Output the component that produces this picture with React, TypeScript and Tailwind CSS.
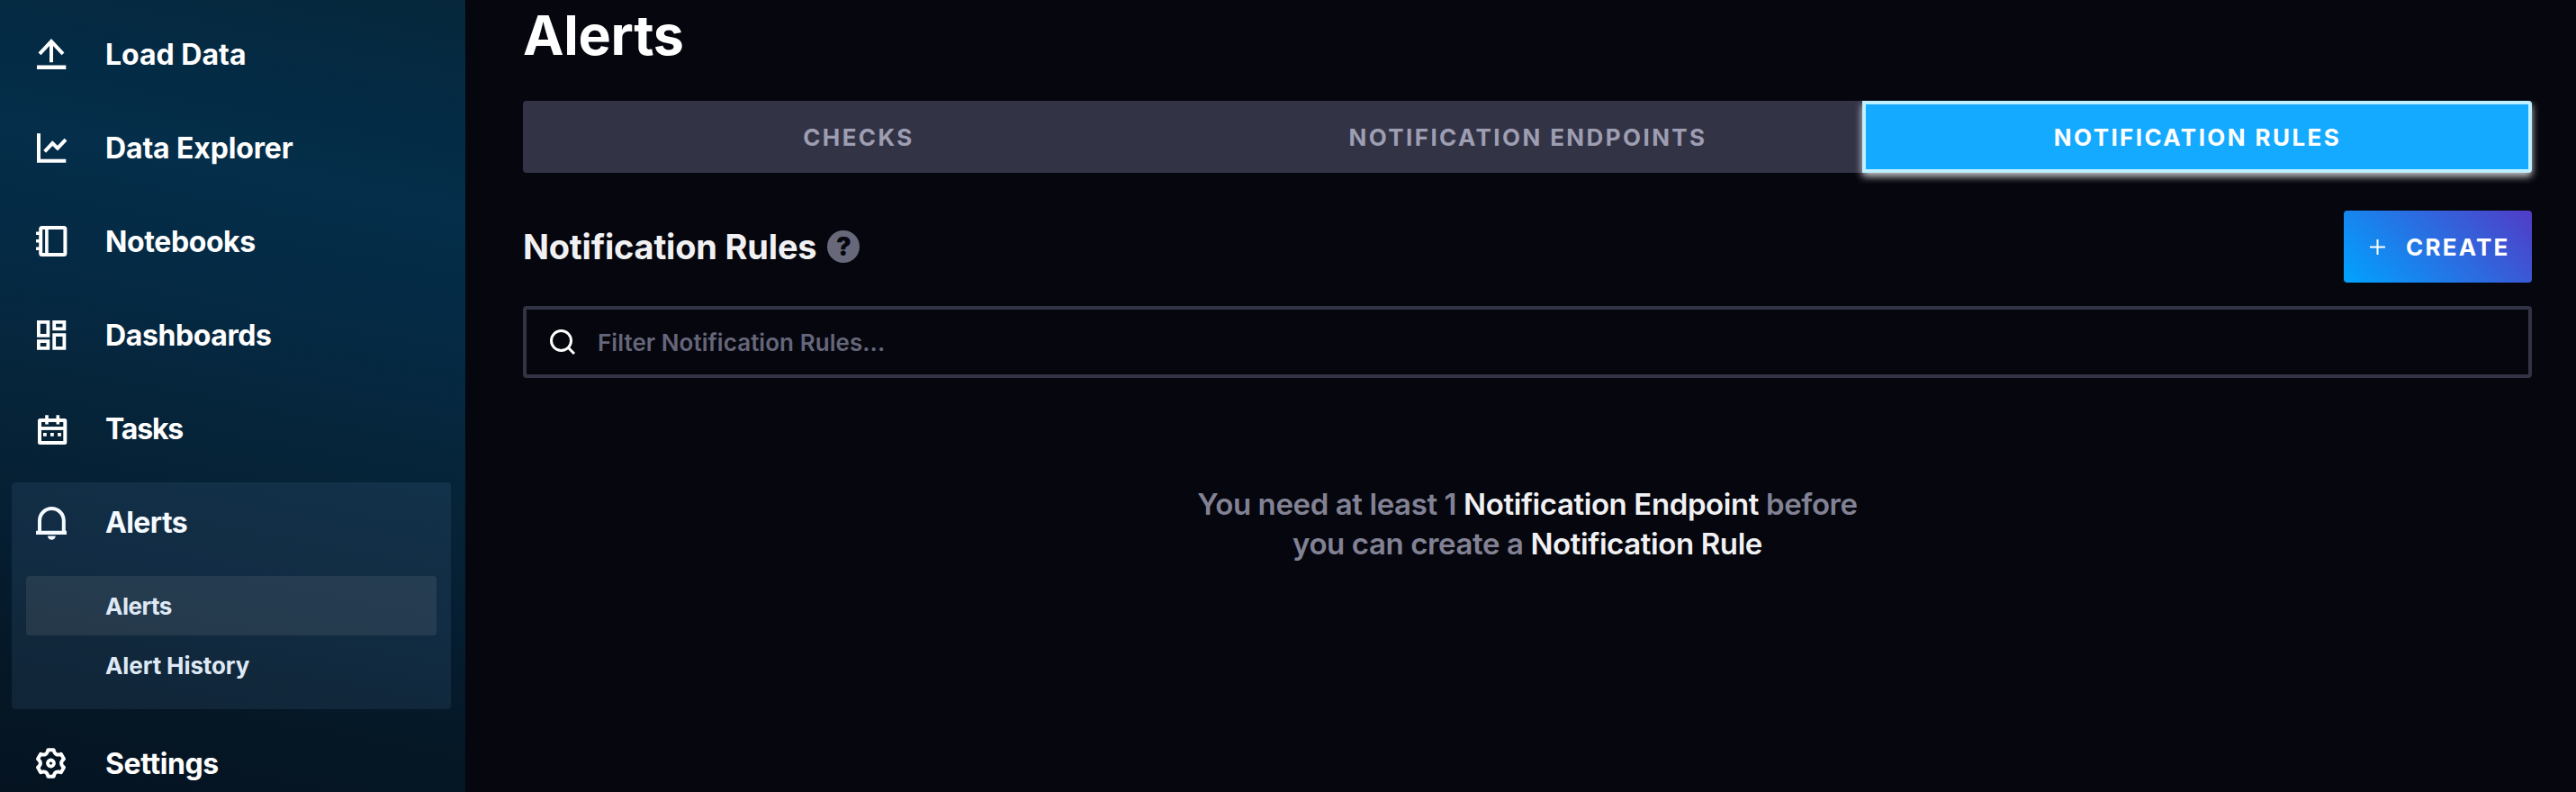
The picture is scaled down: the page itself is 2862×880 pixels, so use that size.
import React from "react";

const SCALLOPED_GEAR = (() => {
  const cx = 17.5;
  const cy = 18;
  const point = (deg: number, r: number) => {
    const a = (deg * Math.PI) / 180;
    return `${(cx + r * Math.cos(a)).toFixed(2)} ${(cy + r * Math.sin(a)).toFixed(2)}`;
  };
  let d = "";
  for (let i = 0; i < 6; i++) {
    const a = -90 + i * 60;
    d += `${i === 0 ? "M" : "L"}${point(a - 12, 15.2)} L${point(a + 12, 15.2)} `;
    d += `C${point(a + 20, 10.8)} ${point(a + 40, 10.8)} ${point(a + 48, 15.2)} `;
  }
  return d + "Z";
})();

function Icon({ children }: { children: React.ReactNode }) {
  return (
    <svg
      className="h-9 w-9 shrink-0 overflow-visible"
      viewBox="0 0 36 36"
      fill="none"
      stroke="currentColor"
      strokeWidth={4}
    >
      {children}
    </svg>
  );
}

const UploadIcon = () => (
  <Icon>
    <path d="M2 32.7H34.3" strokeWidth={4.6} />
    <path d="M5 17.8 18 4 31 17.8M18 3.5V27.3" />
  </Icon>
);

const ChartIcon = () => (
  <Icon>
    <path d="M4 2.3V32.7H34.3" />
    <path d="M10.7 22.3 19.3 13.2 25 18.7 34 9.2" />
  </Icon>
);

const NotebookIcon = () => (
  <Icon>
    <rect x="6.2" y="3" width="27.2" height="30" rx="1.5" />
    <path d="M12.9 3V33" strokeWidth={3.6} />
    <path d="M1 9.3H5M1 17.7H5M1 26.3H5" strokeWidth={3.4} />
  </Icon>
);

const DashboardIcon = () => (
  <Icon>
    <path
      strokeWidth={3.8}
      d="M3.9 3.9H14.4V18.8H3.9ZM21.2 3.9H32.4V11.4H21.2ZM3.9 25.2H14.4V32.8H3.9ZM21.2 18.2H32.4V32.8H21.2Z"
    />
  </Icon>
);

const CalendarIcon = () => (
  <Icon>
    <rect x="5" y="9" width="28.3" height="25" rx="0.5" />
    <path d="M5 18H33" strokeWidth={3.8} />
    <path d="M13 3.3V13.5M25.3 3.3V13.5" strokeWidth={3.6} />
    <path d="M9 24.9H12.8M17 24.9H20.8M25.1 24.9H28.9" strokeWidth={3.8} />
  </Icon>
);

const BellIcon = () => (
  <Icon>
    <path d="M5 29V16.5A13.4 13.4 0 0 1 31.8 16.5V29" />
    <path d="M1 29.8H35" strokeWidth={4.2} />
    <path d="M14 33.5H22.7A4.35 4.35 0 0 1 14 33.5Z" fill="currentColor" stroke="none" />
  </Icon>
);

const GearIcon = () => (
  <Icon>
    <path d={SCALLOPED_GEAR} strokeLinejoin="round" />
    <circle cx="17.5" cy="18" r="3.5" strokeWidth={3.8} />
  </Icon>
);

function NavItem({ icon, label, tracking }: { icon: React.ReactNode; label: string; tracking: string }) {
  return (
    <a className="flex h-[88px] shrink-0 items-center pl-[26px]">
      {icon}
      <span className={`mt-0.5 ml-[42px] text-[32px] leading-10 ${tracking}`}>{label}</span>
    </a>
  );
}

function Sidebar() {
  return (
    <nav className="flex w-[517px] shrink-0 flex-col gap-4 bg-[linear-gradient(11deg,#051321_0%,#051725_14%,#051d30_28%,#062337_42%,#052943_60%,#042e4a_76%,#042a43_88%,#06273b_100%)] pt-4 pr-4 pl-[13px] text-white">
      <NavItem icon={<UploadIcon />} label="Load Data" tracking="tracking-[0px]" />
      <NavItem icon={<ChartIcon />} label="Data Explorer" tracking="tracking-[-0.15px]" />
      <NavItem icon={<NotebookIcon />} label="Notebooks" tracking="tracking-[-0.4px]" />
      <NavItem icon={<DashboardIcon />} label="Dashboards" tracking="tracking-[-0.4px]" />
      <NavItem icon={<CalendarIcon />} label="Tasks" tracking="tracking-[-1.2px]" />
      <div className="shrink-0 rounded bg-[#7eb0ec]/10 px-4 pb-4">
        <div className="-mx-4 mb-4 text-[#f4faff]">
          <NavItem icon={<BellIcon />} label="Alerts" tracking="tracking-[-0.6px]" />
        </div>
        <a className="flex h-[66px] items-center rounded bg-[#ffe8d8]/[0.085] pl-[88px] text-[26px] tracking-[-0.5px] text-[#dfe9f5]">
          Alerts
        </a>
        <a className="flex h-[66px] items-center pl-[88px] text-[26px] tracking-[-0.1px] text-[#dfe9f5]">
          Alert History
        </a>
      </div>
      <NavItem icon={<GearIcon />} label="Settings" tracking="tracking-[-0.4px]" />
    </nav>
  );
}

function Tabs() {
  return (
    <div className="mt-9 grid h-20 grid-cols-3 rounded bg-[#333346] text-[26px] tracking-[2.4px] text-[#9e9eb2]">
      <button className="flex items-center justify-center pl-0.5">CHECKS</button>
      <button className="flex items-center justify-center pl-px">NOTIFICATION ENDPOINTS</button>
      <button className="flex items-center justify-center rounded-r border-4 border-[#bef0ff] bg-[#14aaff] pl-px text-white shadow-[0_4px_8px_rgba(255,255,255,0.8)] [clip-path:inset(0_-20px_-20px_-20px)]">
        NOTIFICATION RULES
      </button>
    </div>
  );
}

function HelpBadge() {
  return (
    <span className="ml-3 flex h-9 w-9 items-center justify-center rounded-full bg-[#68687b] text-[28px] leading-9 font-black text-[#05060e]">
      ?
    </span>
  );
}

export default function App() {
  return (
    <div className="flex h-[880px] w-[2862px] overflow-hidden bg-[#05060e] font-[Inter,'Liberation_Sans',sans-serif] font-bold">
      <Sidebar />
      <main className="flex flex-1 flex-col pr-[49px] pl-16">
        <h1 className="h-[76px] text-[61px] leading-[78px] tracking-[-0.3px] text-white">Alerts</h1>
        <Tabs />
        <div className="mt-[42px] flex h-20 items-center">
          <h2 className="text-[38px] tracking-[-0.2px] text-[#f1f1f3]">Notification Rules</h2>
          <HelpBadge />
          <button className="ml-auto flex h-20 w-[209px] items-center rounded bg-[linear-gradient(45deg,#00a3ff_0%,#513cc6_100%)] pl-[29px] text-[26px] tracking-[2.2px] text-white">
            <svg className="h-[17px] w-[17px]" viewBox="0 0 17 17" stroke="currentColor" strokeWidth={2}>
              <path d="M8.5 0V17M0 8.5H17" />
            </svg>
            <span className="ml-[23px]">CREATE</span>
          </button>
        </div>
        <div className="mt-[26px] flex h-20 items-center rounded border-4 border-[#333346] pl-[26px]">
          <svg className="h-7 w-7 overflow-visible text-white" viewBox="0 0 28 28" fill="none" stroke="currentColor" strokeWidth={3}>
            <circle cx="12.5" cy="12.5" r="11" />
            <path d="M20.3 20.3 27 27" />
          </svg>
          <span className="ml-[25px] text-[26px] font-semibold tracking-[0.05px] text-[#66667a]">
            Filter Notification Rules...
          </span>
        </div>
        <p className="mt-[118px] text-center text-[33px] leading-[44px] font-semibold text-[#828294]">
          <span className="tracking-[-0.4px]">
            You need at least 1 <span className="text-[#f1f1f3]">Notification Endpoint</span> before
          </span>
          <br />
          <span className="tracking-[-0.4px]">
            you can create a <span className="text-[#f1f1f3]">Notification Rule</span>
          </span>
        </p>
      </main>
    </div>
  );
}
